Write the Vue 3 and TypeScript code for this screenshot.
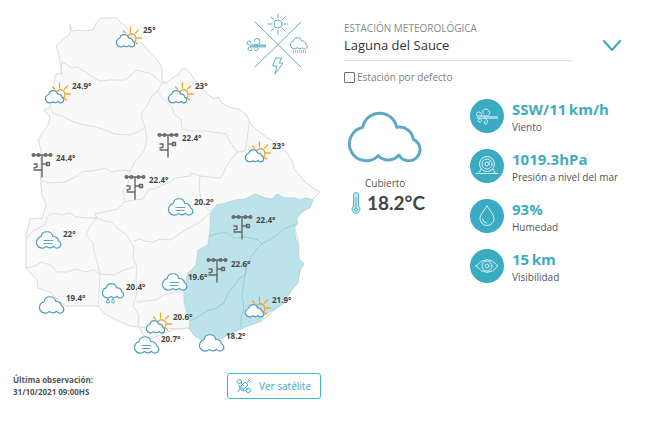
<script setup lang="ts">
import { ref } from 'vue'

type Kind = 'sun' | 'cloud' | 'fog' | 'drizzle' | 'mast'

interface Station {
  kind: Kind
  x: number
  y: number
  temp: string
  tx: number
  ty: number
}

interface Reading {
  icon: string
  value: string
  label: string
}

const CLOUD =
  'M30.3 44.7A16.9 16.9 0 1 1 14.7 16.3A17.3 17.3 0 0 1 48.7 16.3A14 14 0 0 1 65.3 28.3A11.2 11.2 0 1 1 51 44A14 14 0 0 1 30.3 44.7Z'

const stations: Station[] = [
  { kind: 'sun', x: 116, y: 34, temp: '25°', tx: 143, ty: 33 },
  { kind: 'sun', x: 45, y: 90, temp: '24.9°', tx: 72, ty: 89 },
  { kind: 'sun', x: 168, y: 90, temp: '23°', tx: 195, ty: 89 },
  { kind: 'sun', x: 245, y: 149, temp: '23°', tx: 272, ty: 149 },
  { kind: 'sun', x: 245, y: 304, temp: '21.9°', tx: 272, ty: 303 },
  { kind: 'sun', x: 146, y: 320, temp: '20.6°', tx: 173, ty: 320 },
  { kind: 'fog', x: 168, y: 198, temp: '20.2°', tx: 194, ty: 205 },
  { kind: 'fog', x: 36, y: 231, temp: '22°', tx: 63, ty: 237 },
  { kind: 'fog', x: 162, y: 273, temp: '19.6°', tx: 188, ty: 280 },
  { kind: 'fog', x: 134, y: 336, temp: '20.7°', tx: 161, ty: 342 },
  { kind: 'cloud', x: 39, y: 296, temp: '19.4°', tx: 66, ty: 301 },
  { kind: 'cloud', x: 199, y: 334, temp: '18.2°', tx: 226, ty: 339 },
  { kind: 'drizzle', x: 102, y: 283, temp: '20.4°', tx: 126, ty: 290 },
  { kind: 'mast', x: 42, y: 153, temp: '24.4°', tx: 56, ty: 161 },
  { kind: 'mast', x: 135, y: 175, temp: '22.4°', tx: 149, ty: 183 },
  { kind: 'mast', x: 168, y: 133, temp: '22.4°', tx: 182, ty: 141 },
  { kind: 'mast', x: 242, y: 215, temp: '22.4°', tx: 256, ty: 223 },
  { kind: 'mast', x: 217, y: 258, temp: '22.6°', tx: 231, ty: 267 },
]

const country =
  'M70 25L72 31L79 30L85 31L93 30L96 23L101 18L117 18L120 22L126 26L132 36L138 41L145 46L151 54L158 61L162 68L162 80L166 83L171 79L179 74L181 70L185 68L191 74L194 79L202 88L206 93L214 99L218 97L222 103L229 107L239 109L247 115L250 123L257 130L269 139L279 144L288 154L293 162L294 169L301 177L305 182L312 187L320 192L313 199L308 208L300 214L296 221L295 228L298 240L299 258L304 264L300 272L297 283L283 303L262 321L245 327L226 336L213 342L203 341L195 336L189 328L175 329L160 335L150 339L144 336L139 327L130 326L118 321L105 314L98 306L65 306L50 292L38 288L37 280L26 268L26 235L30 219L42 218L46 205L42 195L41 185L40 170L41 150L38 140L48 125L50 117L44 110L50 107L53 95L55 75L62 73L60 62L59 54L56 46L65 38L70 34Z'

const highlighted =
  'M211 212L217 205L226 203L236 200L245 199L255 194L265 198L272 199L277 194L285 198L295 198L300 200L306 198L313 200L310 208L302 211L300 214L296 218L298 223L294 228L296 240L299 246L298 258L304 264L300 268L298 283L290 292L283 304L275 309L263 316L261 321L245 327L226 336L213 341L203 341L195 336L189 328L190 320L187 313L184 302L184 292L185 285L188 273L196 265L197 258L198 250L208 245L210 230Z'

const borders = [
  'M62 62L67 65L72 68L77 67L84 71L91 76L100 81L110 80L125 80L130 76L137 70L144 72L150 73L156 78L162 83L166 83',
  'M62 62L61 71L63 75',
  'M50 108L54 114L62 116L74 122L85 125L96 127L105 130L115 134L130 135L138 132L145 127',
  'M162 83L158 91L152 96L147 106L142 112L142 119L145 127L147 139L144 151L135 162L130 171',
  'M158 91L161 97L172 107L174 114L181 119L182 129L193 131L205 131L226 134L230 142L237 152L245 151L247 141L249 123',
  'M237 152L231 160L226 167L221 178L210 177L200 176L191 173L190 176L183 177L175 178L171 182L162 185L155 189L149 189L143 199L135 200L124 202L118 209L108 211L95 214',
  'M41 180L48 183L65 182L75 177L82 172L97 170L105 168L112 172L121 170L130 171L128 184L123 191L125 202',
  'M26 239L33 231L45 225L48 216L55 213L62 215L70 213L76 217L88 218L97 218',
  'M95 214L97 218L90 226L86 235L93 243L94 252L96 257L98 267L100 274L99 294L98 306',
  'M97 218L104 221L111 222L118 229L126 234L131 243L134 248L133 258L137 267L136 280L137 293L133 306L139 315L138 326',
  'M26 268L35 266L42 262L52 266L57 272L67 272L76 269L85 272L94 270L100 274L114 275L124 270L134 267',
  'M134 241L140 239L144 241L153 242L161 239L170 240L178 235L187 229L200 222L211 212',
  'M200 176L199 188L201 199L206 207L211 212',
  'M137 302L145 301L156 300L164 295L174 292L184 292',
  'M140 327L153 328L166 328L180 329L189 328',
]

const innerBorders = [
  'M209 236L219 233L227 233L234 238L243 237L251 238L258 240L262 244L270 239L276 236L284 229L296 224',
  'M262 244L256 250L251 257L247 266L245 275L240 278L234 286L229 291L224 303L217 308L207 311L198 317L190 321',
  'M246 268L244 281L242 295L244 308L241 318L241 327',
]

const readings: Reading[] = [
  { icon: 'wind', value: 'SSW/11\u2009km/h', label: 'Viento' },
  { icon: 'pressure', value: '1019.3hPa', label: 'Presión a nivel del mar' },
  { icon: 'drop', value: '93%', label: 'Humedad' },
  { icon: 'eye', value: '15\u2009km', label: 'Visibilidad' },
]

const station = ref('Laguna del Sauce')
const isDefault = ref(false)
</script>

<template>
  <main class="page">
    <section class="map-panel">
      <svg class="map" viewBox="0 0 329 360">
        <path class="land" :d="country" />
        <path v-for="d in borders" :key="d" class="border" :d="d" />
        <path class="zone" :d="highlighted" />
        <path v-for="d in innerBorders" :key="d" class="zone-border" :d="d" />

        <g class="legend">
          <path d="M255 22L301 67M301 22L255 67" />
          <circle cx="278" cy="24" r="4" />
          <path d="M278 14v4M278 30v4M268 24h4M284 24h4M271 17l3 3M282 28l3 3M285 17l-3 3M274 28l-3 3" />
          <path d="M276 58h6l-3 5h4l-8 11 2-8h-4z" />
          <g transform="translate(290 37) scale(.24)"><path class="thin" :d="CLOUD" /></g>
          <path class="rain" d="M293 51.500H306" />
          <path d="M254 44.500h3a3 3 0 1 0-3-3M249 45a2 2 0 1 1 2-2M251 47a2 2 0 1 0 1 2M255 47a2 2 0 1 1-1 2" />
          <path class="gust" d="M250 46h16" />
        </g>

        <g v-for="s in stations" :key="s.tx + '-' + s.ty">
          <g :transform="`translate(${s.x} ${s.y})`">
            <template v-if="s.kind === 'sun'">
              <g class="sun">
                <path d="M11 4a4.500 4.500 0 1 1 7 4" />
                <path d="M14.500 -7v5M19.500 -1l3 -3M20.500 4h5M9.500 -1l-2 -2M19.500 8l2 2" />
              </g>
              <g transform="scale(.26)"><path class="cloud" :d="CLOUD" /></g>
            </template>
            <template v-else-if="s.kind === 'mast'">
              <g class="mast">
                <path d="M0 2V24M-9 2H9M0 11H5M-8 17H0" />
                <path d="M4.500 9.500h3v3h-3zM-8 15l3-1v-3h-3" />
                <circle cx="-8.500" cy="2" r="1.300" />
                <circle cx="-3.500" cy="2" r="1.300" />
                <circle cx="3.500" cy="2" r="1.300" />
                <circle cx="8.500" cy="2" r="1.300" />
              </g>
            </template>
            <template v-else-if="s.kind === 'drizzle'">
              <g transform="scale(.3)"><path class="cloud" :d="CLOUD" /></g>
              <path class="drop" d="M6 16q-3 4 0 4t0-4zM11 16q-3 4 0 4t0-4z" />
            </template>
            <template v-else>
              <g transform="scale(.345)"><path class="cloud" :d="CLOUD" /></g>
              <path v-if="s.kind === 'fog'" class="fog" d="M8 9.500h9M8 12.500h8" />
            </template>
          </g>
          <text class="temp" :x="s.tx" :y="s.ty">{{ s.temp }}</text>
        </g>
      </svg>

      <footer class="map-footer">
        <p class="updated">Última observación:<br />31/10/2021 09:00HS</p>
        <button class="satellite" type="button">
          <svg class="satellite-icon" viewBox="0 0 16 16">
            <path d="M5 8l4-4 3 3-4 4zM1 3l3-2 2 3-3 2zM10 12l3-2 2 3-3 2zM5 5l2 2M9 9l2 2M11 5l2-2M12 1l3 3M3 8a5 5 0 0 0 5 5zM4 11l-2 3" />
          </svg>
          Ver satélite
        </button>
      </footer>
    </section>

    <section class="details">
      <label class="picker-label" for="station">ESTACIÓN METEOROLÓGICA</label>
      <div class="picker">
        <select id="station" v-model="station" class="picker-select">
          <option>Laguna del Sauce</option>
        </select>
        <svg class="chevron" viewBox="0 0 18 12"><path d="M1 1l8 9 8-9" /></svg>
      </div>
      <label class="default">
        <input v-model="isDefault" class="default-box" type="checkbox" />
        Estación por defecto
      </label>

      <div class="weather">
        <div class="current">
          <svg class="current-icon" viewBox="-1 -2 76 54"><path :d="CLOUD" /></svg>
          <p class="condition">Cubierto</p>
          <p class="temperature">
            <svg class="thermometer" viewBox="0 0 10 24">
              <path class="tube" d="M2.500 15V4a2.500 2.500 0 0 1 5 0v11a4 4 0 1 1-5 0z" />
              <circle cx="5" cy="18.500" r="1.500" />
              <path d="M5 6v11" />
            </svg>
            18.2°C
          </p>
        </div>

        <ul class="readings">
          <li v-for="r in readings" :key="r.label" class="reading">
            <svg class="reading-icon" viewBox="0 0 34 34">
              <circle class="disc" cx="17" cy="17" r="17" />
              <g v-if="r.icon === 'wind'">
                <path class="stream" d="M14 18.500h14" />
                <path d="M7 19h7M12 17h4c6-1 4-7-.5-7a3 3 0 0 0-2 5M11 17a2.500 2.500 0 1 0-4 0h5M9 19c4 1 3 5 0 4a2 2 0 0 1 0-3M14 19c5 1 4 7 1 6a2 2 0 0 1 0-3" />
              </g>
              <g v-else-if="r.icon === 'pressure'">
                <circle cx="17" cy="15" r="7.500" />
                <circle cx="17" cy="15" r="5" />
                <circle cx="17" cy="15" r="2" />
                <path d="M18.500 13.500l2-2M11 20l-2 4M23 20l2 4M6 24.500h22" />
              </g>
              <g v-else-if="r.icon === 'drop'">
                <path d="M17 7c-4 6-7 9-7 12.500a7 7 0 0 0 14 0C24 16 21 13 17 7z" />
                <path d="M12.500 20a4.500 4.500 0 0 0 4 4" />
              </g>
              <g v-else>
                <path d="M6 17q11-13 22 0q-11 13-22 0z" />
                <circle cx="17" cy="17" r="5" />
                <circle cx="17" cy="17" r="2" />
              </g>
            </svg>
            <div>
              <strong class="value">{{ r.value }}</strong>
              <span class="name">{{ r.label }}</span>
            </div>
          </li>
        </ul>
      </div>
    </section>
  </main>
</template>

<style>
body {
  background: #fff;
}
</style>

<style scoped>
.page {
  display: grid;
  grid-template-columns: 1fr 1fr;
  font-family: 'Open Sans', 'Noto Sans', sans-serif;
  color: #555;
}

svg {
  fill: none;
  stroke-linecap: round;
  stroke-linejoin: round;
}

p {
  margin: 0;
}

.map {
  display: block;
  width: 100%;
}

.land {
  fill: #f9f9f9;
  stroke: #dadada;
}

.border {
  stroke: #dedede;
}

.zone {
  fill: #bce2ea;
  stroke: #b3d9e1;
}

.zone-border {
  stroke: #9fcbd5;
}

.legend {
  stroke: #5fafc9;
}

.rain {
  stroke: #8fc4d6;
  stroke-width: 3;
  stroke-linecap: butt;
  stroke-dasharray: 1 1;
}

.gust {
  stroke: #7dbcd1;
  stroke-width: 3;
  stroke-linecap: butt;
}

.thin,
.cloud {
  vector-effect: non-scaling-stroke;
}

.cloud {
  fill: #fff;
  stroke: #4f9cc0;
  stroke-width: 1.2;
}

.sun {
  stroke: #f0a830;
  stroke-width: 1.3;
}

.fog,
.drop {
  stroke: #58a5c5;
}

.mast {
  stroke: #666;
  stroke-width: 1.4;
}

.temp {
  fill: #444;
  font-size: 8px;
  font-weight: 700;
}

.map-footer {
  display: flex;
  align-items: center;
  justify-content: space-between;
  padding: 13px 8px 0 13px;
}

.updated {
  font-size: 8px;
  font-weight: 700;
  line-height: 12px;
}

.satellite {
  display: flex;
  align-items: center;
  gap: 7px;
  height: 26px;
  padding: 0 9px 0 8px;
  border: 1px solid #3fb3cd;
  border-radius: 3px;
  background: #fff;
  color: #3aa7c2;
  font: 10px 'Open Sans', sans-serif;
}

.satellite-icon {
  width: 16px;
  height: 16px;
  stroke: #3fb3cd;
}

.details {
  padding: 21px 37px 0 15px;
}

.picker-label {
  display: block;
  color: #888;
  font-size: 10px;
  line-height: 15px;
}

.picker {
  display: flex;
  align-items: center;
  gap: 31px;
}

.picker-select {
  flex: 1;
  height: 25px;
  padding: 0 0 6px;
  appearance: none;
  border: 0;
  border-bottom: 1px solid #ddd;
  border-radius: 0;
  background: transparent;
  color: #333;
  font: 13px 'Open Sans', sans-serif;
}

.chevron {
  width: 18px;
  height: 12px;
  margin-bottom: 6px;
  stroke: #3aa7c2;
  stroke-width: 2;
}

.default {
  display: flex;
  align-items: center;
  gap: 2px;
  margin-top: 8px;
  color: #808080;
  font-size: 10px;
  line-height: 16px;
}

.default-box {
  width: 11px;
  height: 11px;
  margin: 0;
  appearance: none;
  border: 1px solid #707078;
  border-radius: 1px;
  background: #fff;
}

.default-box:checked {
  background: #3aa7c2;
}

.weather {
  display: grid;
  grid-template-columns: 126px 1fr;
  margin-top: 13px;
}

.current {
  padding: 11px 0 0 3px;
}

.current-icon {
  display: block;
  width: 76px;
  height: 54px;
  stroke: #5fa9c6;
  stroke-width: 3;
}

.condition {
  padding: 13px 0 0 18px;
  font-size: 10px;
  line-height: 14px;
}

.temperature {
  display: flex;
  align-items: center;
  gap: 6px;
  padding: 1px 0 0 4px;
  color: #444;
  font: 700 19px/24px Lato, sans-serif;
}

.thermometer {
  width: 10px;
  height: 24px;
  stroke: #4bb5c8;
}

.tube {
  fill: #c7eaf0;
}

.readings {
  display: grid;
  gap: 14px;
  margin: 0;
  padding: 0;
  list-style: none;
}

.reading {
  display: flex;
  align-items: center;
  gap: 8px;
  white-space: nowrap;
}

.reading-icon {
  width: 34px;
  height: 34px;
  stroke: #d9f3f8;
}

.stream {
  stroke: #9bd6e2;
  stroke-width: 3;
  stroke-linecap: butt;
}

.disc {
  fill: #3aabc3;
  stroke: none;
}

.value,
.name {
  display: block;
}

.value {
  color: #3fabc2;
  font-size: 15px;
  line-height: 22px;
}

.name {
  font-size: 10px;
  line-height: 14px;
}
</style>
